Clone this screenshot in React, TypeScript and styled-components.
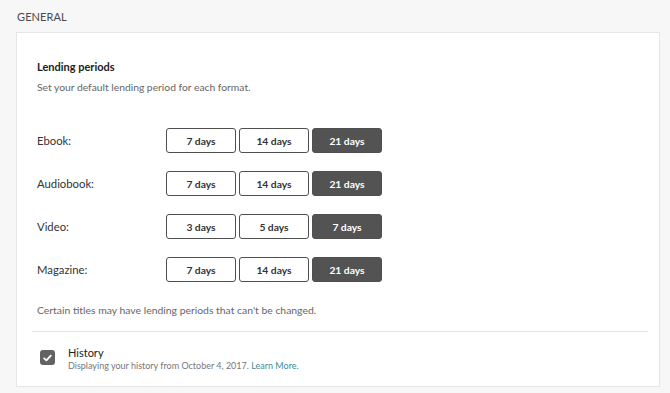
import styled, { createGlobalStyle } from "styled-components";

type Format = { label: string; options: string[]; selected: number };

const formats: Format[] = [
  { label: "Ebook:", options: ["7 days", "14 days", "21 days"], selected: 2 },
  { label: "Audiobook:", options: ["7 days", "14 days", "21 days"], selected: 2 },
  { label: "Video:", options: ["3 days", "5 days", "7 days"], selected: 2 },
  { label: "Magazine:", options: ["7 days", "14 days", "21 days"], selected: 2 },
];

const App = () => {
  return (
    <Page>
      <GlobalStyle />
      <SectionTitle>GENERAL</SectionTitle>
      <Card>
        <LendingSection>
          <Title>Lending periods</Title>
          <Subtitle>Set your default lending period for each format.</Subtitle>
          <Rows>
            {formats.map((f) => (
              <Row key={f.label}>
                <Label>{f.label}</Label>
                <Options>
                  {f.options.map((o, i) => (
                    <Option key={o} $active={i === f.selected}>
                      {o}
                    </Option>
                  ))}
                </Options>
              </Row>
            ))}
          </Rows>
          <Note>Certain titles may have lending periods that can't be changed.</Note>
        </LendingSection>
        <Divider />
        <HistoryRow>
          <Checkbox>
            <svg width="9" height="8" viewBox="0 0 9 8">
              <path
                d="M1.2 4.4 L3.4 6.4 L7.8 1.6"
                fill="none"
                stroke="#fff"
                strokeWidth="1.8"
                strokeLinecap="round"
                strokeLinejoin="round"
              />
            </svg>
          </Checkbox>
          <HistoryText>
            <HistoryTitle>History</HistoryTitle>
            <HistoryDesc>
              Displaying your history from October 4, 2017. <Link>Learn More.</Link>
            </HistoryDesc>
          </HistoryText>
        </HistoryRow>
      </Card>
    </Page>
  );
};

const GlobalStyle = createGlobalStyle`
  body {
    margin: 0;
    background: #f7f7f7;
    font-family: Lato, "Liberation Sans", sans-serif;
    color: #333;
  }
`;

const Page = styled.div`
  width: 670px;
  height: 393px;
  padding: 10px 10px 0 16px;
  box-sizing: border-box;
  overflow: hidden;
`;

const SectionTitle = styled.div`
  font-size: 11px;
  line-height: 14px;
  color: #4a4a4a;
  letter-spacing: 0.1px;
  padding-left: 1px;
  height: 22px;
`;

const Card = styled.div`
  width: 644px;
  height: 355px;
  box-sizing: border-box;
  background: #fff;
  border: 1px solid #e6e6e6;
`;

const LendingSection = styled.div`
  padding: 27px 20px 0 20px;
`;

const Title = styled.div`
  font-size: 11px;
  line-height: 14px;
  font-weight: 700;
  color: #222;
`;

const Subtitle = styled.div`
  margin-top: 6px;
  font-size: 10.3px;
  line-height: 14px;
  color: #666;
`;

const Rows = styled.div`
  margin-top: 34px;
  display: flex;
  flex-direction: column;
  gap: 18px;
`;

const Row = styled.div`
  display: flex;
  align-items: center;
  height: 25px;
`;

const Label = styled.div`
  width: 129px;
  font-size: 11.3px;
  color: #333;
`;

const Options = styled.div`
  display: flex;
  gap: 3px;
`;

const Option = styled.div<{ $active: boolean }>`
  width: 70px;
  height: 25px;
  box-sizing: border-box;
  display: flex;
  align-items: center;
  justify-content: center;
  border: 1.5px solid #4f4f4f;
  border-radius: 3px;
  font-size: 10.3px;
  font-weight: 700;
  background: ${(p) => (p.$active ? "#535353" : "#fff")};
  color: ${(p) => (p.$active ? "#fff" : "#333")};
`;

const Note = styled.div`
  margin-top: 21px;
  font-size: 10.4px;
  line-height: 14px;
  color: #666;
`;

const Divider = styled.div`
  margin: 14px 11px 0 15px;
  border-top: 1px solid #e4e4e4;
`;

const HistoryRow = styled.div`
  display: flex;
  align-items: flex-start;
  padding: 14px 0 0 23px;
  gap: 13px;
`;

const Checkbox = styled.div`
  margin-top: 4px;
  width: 15px;
  height: 15px;
  border-radius: 3px;
  background: #626262;
  display: flex;
  align-items: center;
  justify-content: center;
`;

const HistoryText = styled.div`
  display: flex;
  flex-direction: column;
`;

const HistoryTitle = styled.div`
  font-size: 11px;
  line-height: 14px;
  color: #222;
`;

const HistoryDesc = styled.div`
  font-size: 9px;
  line-height: 12px;
  color: #777;
`;

const Link = styled.span`
  color: #3f8b98;
`;

export default App;
